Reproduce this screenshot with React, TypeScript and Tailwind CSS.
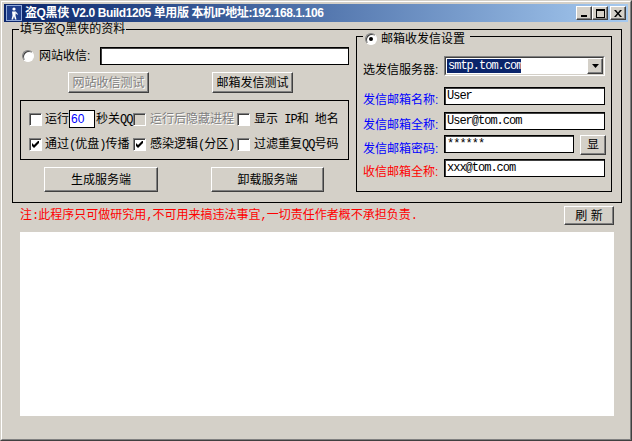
import type { ReactNode } from "react"

// classic win98-style controls
function Btn({ className = "", children, disabled = false }: { className?: string; children?: ReactNode; disabled?: boolean }) {
  return (
    <div
      className={`flex items-center justify-center shrink-0 bg-[#D4D0C8] border border-t-white border-l-white border-r-[#404040] border-b-[#404040] shadow-[inset_-1px_-1px_0_#808080] ${
        disabled ? "text-[#808080] [text-shadow:1px_1px_0_#ffffff]" : "text-black"
      } ${className}`}
    >
      {children}
    </div>
  )
}

function Check({ checked = false, disabled = false }: { checked?: boolean; disabled?: boolean }) {
  return (
    <span
      className={`w-[13px] h-[13px] shrink-0 flex items-center justify-center border border-t-[#808080] border-l-[#808080] border-r-white border-b-white shadow-[inset_1px_1px_0_#404040] ${
        disabled ? "bg-[#D4D0C8]" : "bg-white"
      }`}
    >
      {checked && (
        <svg width="7" height="7" viewBox="0 0 7 7">
          <path d="M0 2 L2 4 L6 0 L7 0 L7 2 L2 7 L0 5 Z" fill="#000" />
        </svg>
      )}
    </span>
  )
}

function Radio({ checked = false }: { checked?: boolean }) {
  return (
    <span className="w-[12px] h-[12px] shrink-0 rounded-full bg-white border border-t-[#808080] border-l-[#808080] border-r-white border-b-white shadow-[inset_1px_1px_0_#404040] flex items-center justify-center">
      {checked && <span className="w-[4px] h-[4px] rounded-full bg-black" />}
    </span>
  )
}

// half-width ascii like the old bitmap font
function A({ children }: { children: ReactNode }) {
  return <span className="font-['Liberation_Mono',monospace] text-[12px] tracking-[-1px]">{children}</span>
}

function Field({ className = "", children }: { className?: string; children?: ReactNode }) {
  return (
    <div
      className={`shrink-0 flex items-center bg-white border border-black shadow-[inset_1px_1px_0_#404040] pl-[2px] font-['Liberation_Mono','Noto_Sans_CJK_SC',monospace] text-[12px] tracking-[-1px] ${className}`}
    >
      {children}
    </div>
  )
}

function Label({ className = "", children }: { className?: string; children: ReactNode }) {
  return <span className={`w-[81px] shrink-0 mt-[8px] whitespace-nowrap ${className}`}>{children}</span>
}

export default function App() {
  return (
    <div className="w-[632px] h-[441px] overflow-hidden bg-[#D4D0C8] border border-t-[#D4D0C8] border-l-[#D4D0C8] border-r-[#404040] border-b-[#404040] text-[12px] leading-[12px] text-black font-['Liberation_Sans','Noto_Sans_CJK_SC',sans-serif]">
      <div className="h-full flex flex-col border border-t-white border-l-white border-r-[#808080] border-b-[#808080] p-[2px]">
        {/* title bar */}
        <div className="h-[18px] shrink-0 flex items-center bg-linear-to-r from-[#0A246A] to-[#A6CAF0] pl-[2px] pr-[2px]">
          <svg width="16" height="16" viewBox="0 0 16 16">
            <rect x="0.5" y="0.5" width="15" height="15" fill="#1F3E8C" stroke="#8FA8D8" />
            <circle cx="8" cy="4" r="1.6" fill="#fff" />
            <path d="M6 6.5h4l-0.5 4 1 4h-1.5l-1-3.2-1 3.2h-1.5l1-4z" fill="#fff" />
            <path d="M10 6.8l2 2.5-0.8 0.5-1.6-1.8z" fill="#fff" />
          </svg>
          <span className="ml-[3px] font-bold text-white whitespace-nowrap tracking-[-0.4px]">盗Q黑侠 V2.0 Build1205 单用版 本机IP地址:192.168.1.106</span>
          <div className="ml-auto flex items-center">
            <Btn className="w-[16px] h-[14px]">
              <svg width="8" height="7" viewBox="0 0 8 7">
                <rect x="1" y="5" width="6" height="2" fill="#000" />
              </svg>
            </Btn>
            <Btn className="w-[16px] h-[14px]">
              <svg width="9" height="9" viewBox="0 0 9 9">
                <rect x="0.5" y="0.5" width="8" height="8" fill="none" stroke="#000" />
                <rect x="0" y="0" width="9" height="2" fill="#000" />
              </svg>
            </Btn>
            <Btn className="w-[16px] h-[14px] ml-[2px]">
              <svg width="8" height="7" viewBox="0 0 8 7">
                <path d="M0 0h2l2 2.5 2-2.5h2l-3 3.5 3 3.5h-2l-2-2.5-2 2.5h-2l3-3.5z" fill="#000" />
              </svg>
            </Btn>
          </div>
        </div>

        {/* main group */}
        <fieldset className="mt-[1px] ml-[8px] w-[610px] border border-black pb-[10px]">
          <legend className="ml-[6px] px-[1px] leading-[12px]">填写盗Q黑侠的资料</legend>
          <div className="flex items-start">
            {/* left column */}
            <div className="w-[343px] shrink-0 flex flex-col">
              <div className="mt-[12px] h-[18px] flex items-center pl-[9px] pr-[7px]">
                <Radio />
                <span className="ml-[5px]">网站收信:</span>
                <Field className="ml-auto w-[249px] h-[18px]" />
              </div>
              <div className="mt-[7px] flex">
                <Btn disabled className="ml-[55px] w-[81px] h-[21px]">网站收信测试</Btn>
                <Btn className="ml-[63px] w-[81px] h-[21px]">邮箱发信测试</Btn>
              </div>
              <div className="mt-[7px] ml-[7px] w-[329px] border border-black pt-[9px] pb-[6px] pl-[8px] grid grid-cols-[104px_104px_104px] gap-y-[7px]">
                <div className="h-[18px] flex items-center whitespace-nowrap">
                  <Check />
                  <span className="ml-[3px]">运行</span>
                  <div className="w-[26px] h-[18px] shrink-0 flex items-center bg-white border border-black pl-[1px] text-[#0000FF]">60</div>
                  <span className="ml-[1px]">
                    秒关<A>QQ</A>
                  </span>
                </div>
                <div className="h-[18px] flex items-center whitespace-nowrap">
                  <Check disabled />
                  <span className="ml-[4px] text-[#808080] [text-shadow:1px_1px_0_#ffffff]">运行后隐藏进程</span>
                </div>
                <div className="h-[18px] flex items-center whitespace-nowrap">
                  <Check />
                  <span className="ml-[4px]">
                    显示<A> IP</A>和<A> </A>地名
                  </span>
                </div>
                <div className="h-[18px] flex items-center whitespace-nowrap">
                  <Check checked />
                  <span className="ml-[3px]">
                    通过<A>(</A>优盘<A>)</A>传播
                  </span>
                </div>
                <div className="h-[18px] flex items-center whitespace-nowrap">
                  <Check checked />
                  <span className="ml-[4px]">
                    感染逻辑<A>(</A>分区<A>)</A>
                  </span>
                </div>
                <div className="h-[18px] flex items-center whitespace-nowrap">
                  <Check />
                  <span className="ml-[4px]">
                    过滤重复<A>QQ</A>号码
                  </span>
                </div>
              </div>
              <div className="mt-[7px] flex">
                <Btn className="ml-[31px] w-[114px] h-[25px]">生成服务端</Btn>
                <Btn className="ml-[53px] w-[113px] h-[25px]">卸载服务端</Btn>
              </div>
            </div>

            {/* right group */}
            <fieldset className="-mt-[8px] w-[256px] shrink-0 border border-black pl-[6px] pb-[14px]">
              <legend className="pt-[6px] pl-[2px] pr-[5px]">
                <span className="flex items-center h-[12px]">
                  <Radio checked />
                  <span className="ml-[4px]">邮箱收发信设置</span>
                </span>
              </legend>
              <div className="flex flex-col">
                <div className="mt-[11px] h-[20px] flex items-center">
                  <Label>选发信服务器:</Label>
                  <div className="w-[161px] h-[20px] shrink-0 border border-t-[#808080] border-l-[#808080] border-r-white border-b-white">
                    <div className="h-full flex items-center bg-white border border-t-[#404040] border-l-[#404040] border-r-[#D4D0C8] border-b-[#D4D0C8]">
                      <span className="ml-[1px] h-[14px] w-[74px] flex items-center pl-[1px] bg-[#0A246A] text-white font-['Liberation_Mono',monospace] text-[12px] tracking-[-1px]">
                        smtp.tom.com
                      </span>
                      <Btn className="ml-auto w-[16px] h-full">
                        <svg width="7" height="4" viewBox="0 0 7 4">
                          <path d="M0 0h7l-3.5 4z" fill="#000" />
                        </svg>
                      </Btn>
                    </div>
                  </div>
                </div>
                <div className="mt-[11px] h-[18px] flex items-center">
                  <Label className="text-[#0000FF]">发信邮箱名称:</Label>
                  <Field className="w-[161px] h-[18px]">User</Field>
                </div>
                <div className="mt-[7px] h-[18px] flex items-center">
                  <Label className="text-[#0000FF]">发信邮箱全称:</Label>
                  <Field className="w-[161px] h-[18px]">User@tom.com</Field>
                </div>
                <div className="mt-[5px] h-[20px] flex items-center">
                  <Label className="text-[#0000FF]">发信邮箱密码:</Label>
                  <Field className="w-[130px] h-[18px] self-start">******</Field>
                  <Btn className="ml-[6px] w-[26px] h-[20px]">显</Btn>
                </div>
                <div className="mt-[4px] h-[18px] flex items-center">
                  <Label className="text-[#FF0000]">收信邮箱全称:</Label>
                  <Field className="w-[161px] h-[18px]">xxx@tom.com</Field>
                </div>
              </div>
            </fieldset>
          </div>
        </fieldset>

        {/* note + refresh */}
        <div className="mt-[3px] h-[19px] shrink-0 flex items-center pl-[16px] pr-[14px]">
          <span className="text-[#FF0000] whitespace-nowrap">
            注<A>:</A>此程序只可做研究用<A>,</A>不可用来搞违法事宜<A>,</A>一切责任作者概不承担负责<A>.</A>
          </span>
          <Btn className="ml-auto w-[50px] h-[19px]">刷 新</Btn>
        </div>

        {/* log area */}
        <div className="mt-[7px] ml-[16px] w-[594px] h-[184px] shrink-0 bg-white" />
      </div>
    </div>
  )
}
